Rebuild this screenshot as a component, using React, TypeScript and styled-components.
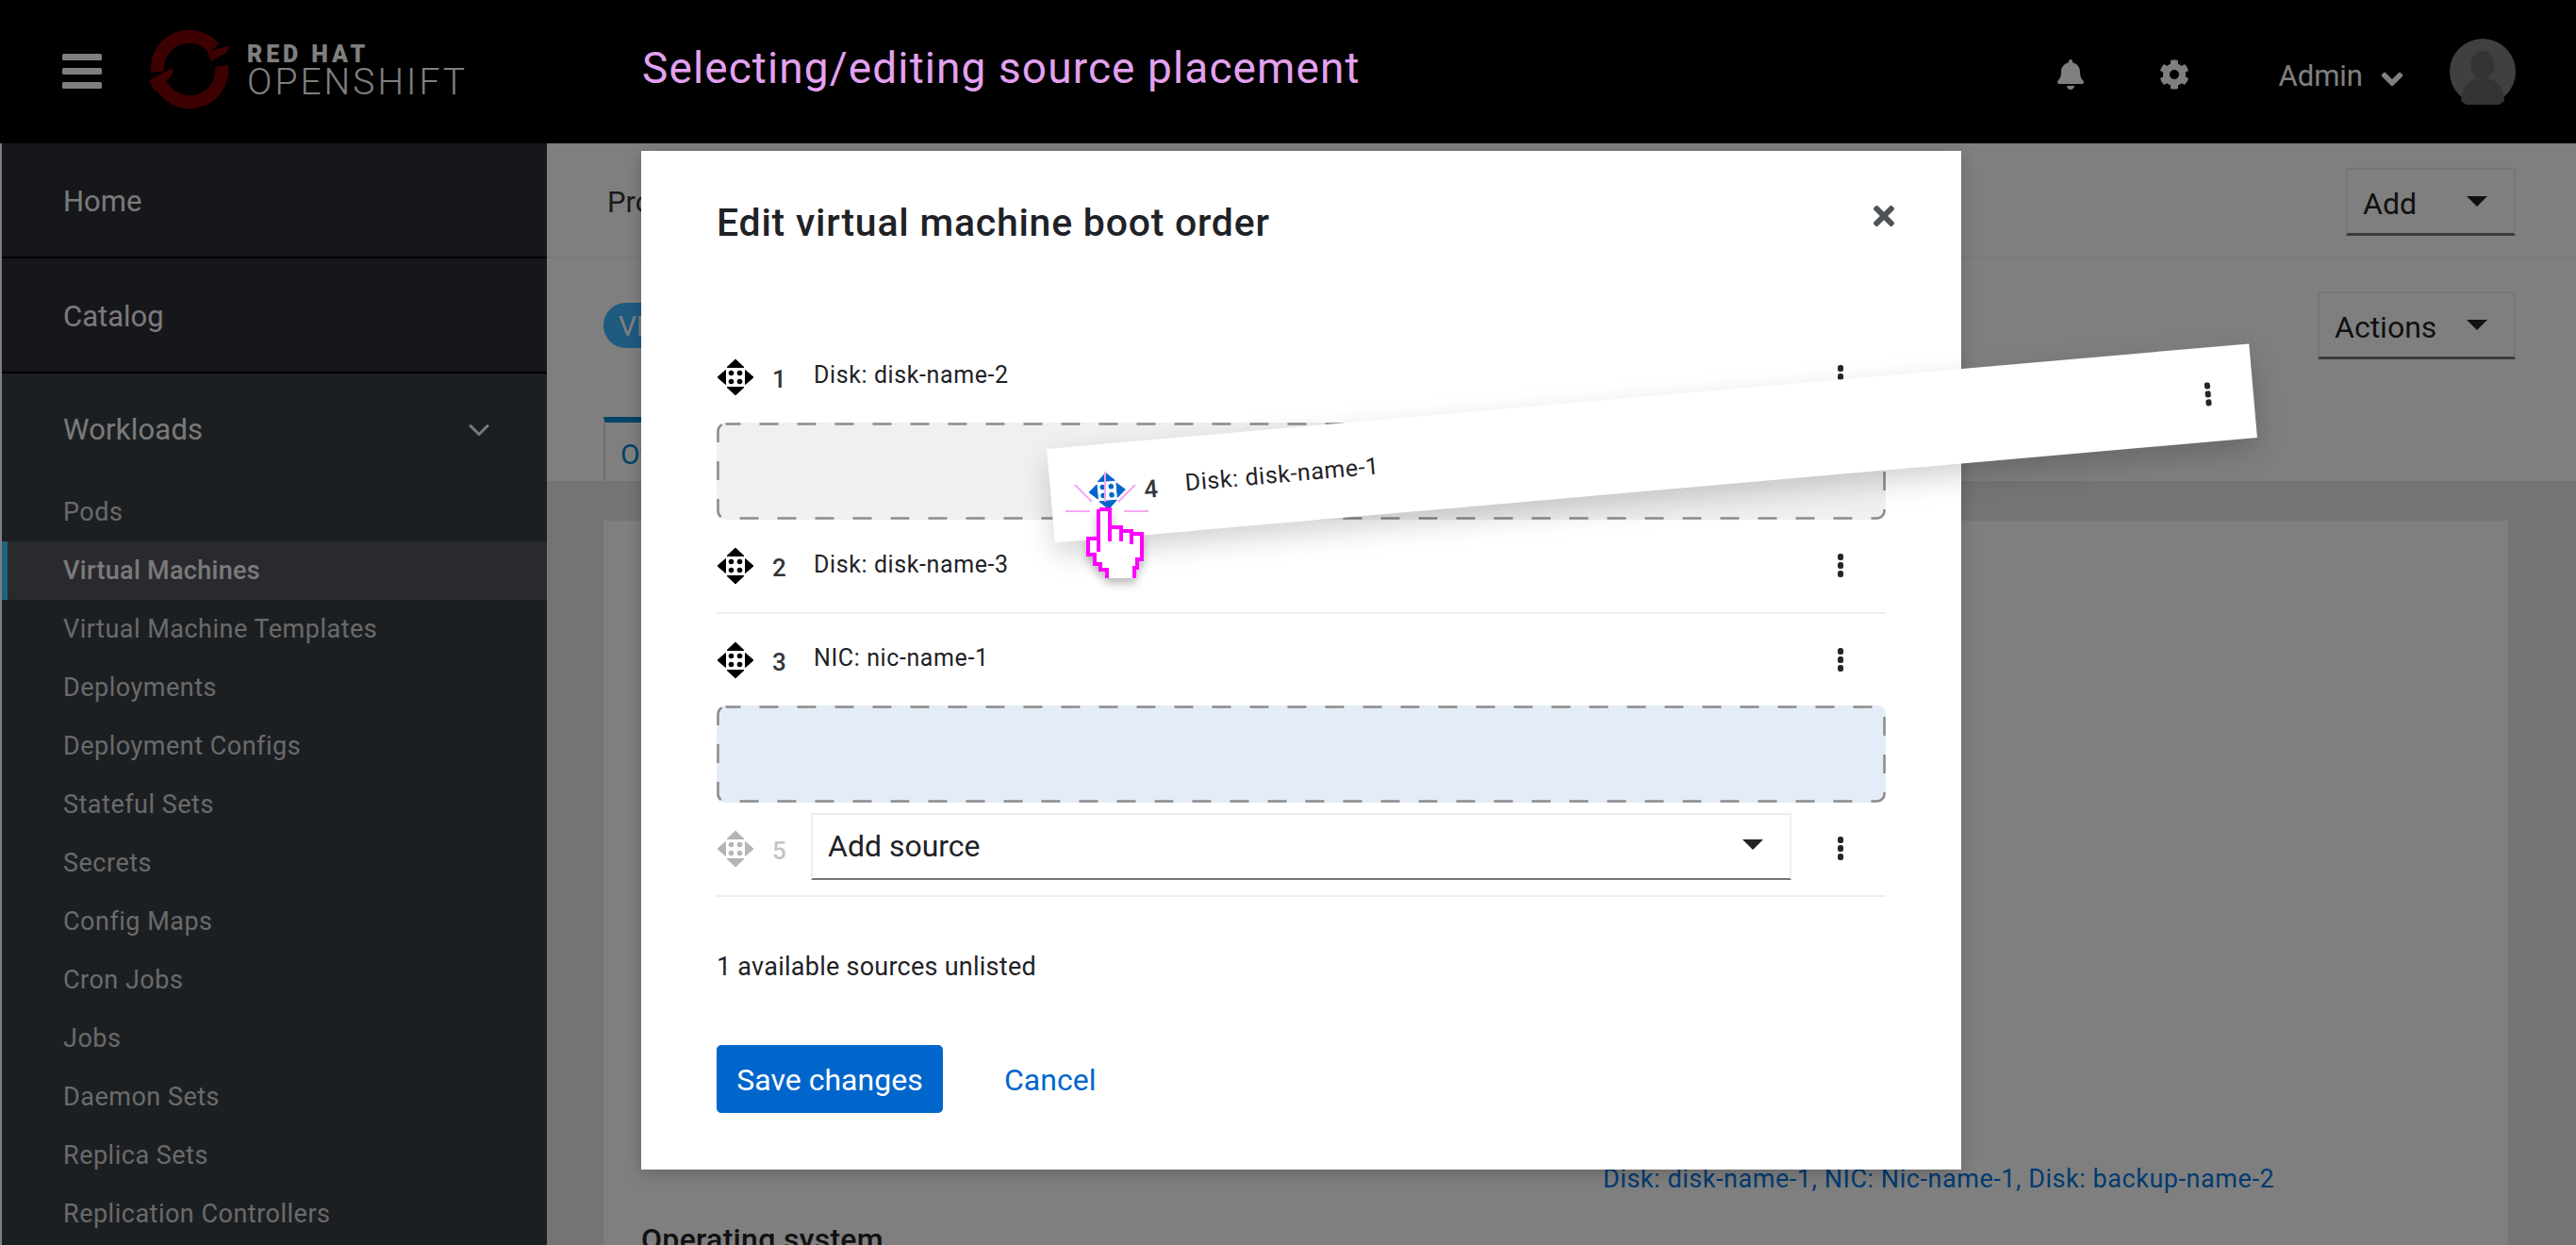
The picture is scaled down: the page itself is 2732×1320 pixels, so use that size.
import React from 'react';
import styled, { createGlobalStyle } from 'styled-components';
import { FaBell, FaCog, FaAngleDown, FaTimes } from 'react-icons/fa';
import { ChevronDown } from 'lucide-react';

const FONT = `Roboto, "Liberation Sans", sans-serif`;

const GlobalStyle = createGlobalStyle`
  html, body {
    margin: 0;
    padding: 0;
    background: #fff;
    font-family: ${FONT};
  }
  * { box-sizing: border-box; }
`;

const navItems = [
  'Pods',
  'Virtual Machines',
  'Virtual Machine Templates',
  'Deployments',
  'Deployment Configs',
  'Stateful Sets',
  'Secrets',
  'Config Maps',
  'Cron Jobs',
  'Jobs',
  'Daemon Sets',
  'Replica Sets',
  'Replication Controllers',
];

const MoveIcon = ({ color = '#000' }: { color?: string }) => (
  <svg width="40" height="40" viewBox="0 0 40 40" fill={color} stroke={color} strokeWidth="1" strokeLinejoin="round">
    <path d="M20 1 L29 9.5 H11 Z" />
    <path d="M20 39 L29 30.5 H11 Z" />
    <path d="M1 20 L9.5 12.5 V27.5 Z" />
    <path d="M39 20 L30.5 12.5 V27.5 Z" />
    <g stroke="none">
      <circle cx="15.5" cy="15.5" r="2.8" />
      <circle cx="24.5" cy="15.5" r="2.8" />
      <circle cx="15.5" cy="24.5" r="2.8" />
      <circle cx="24.5" cy="24.5" r="2.8" />
    </g>
  </svg>
);

const Kebab = () => (
  <svg width="8" height="28" viewBox="0 0 8 28" fill="#23262b">
    <rect x="1" y="1" width="6" height="7" rx="2.5" />
    <rect x="1" y="10" width="6" height="7" rx="2.5" />
    <rect x="1" y="19" width="6" height="7" rx="2.5" />
  </svg>
);

const Logo = () => (
  <svg width="100" height="94" viewBox="10 8 100 94">
    <g fill="none" stroke="#7d0303" strokeWidth="14">
      <path d="M87 32 A34 34 0 0 0 27 57" />
      <path d="M29 66 A34 34 0 0 0 95 51" />
    </g>
    <g fill="#7d0303">
      <path d="M80 36 L104 29 L101 36 L84 46 Z" />
      <path d="M18 66 L43 53 L43 60 L25 79 Z" />
    </g>
  </svg>
);

const Avatar = () => (
  <svg width="70" height="70" viewBox="0 0 70 70">
    <circle cx="35" cy="35" r="35" fill="#818181" />
    <ellipse cx="35" cy="28" rx="12.5" ry="15" fill="#696969" />
    <path d="M12 66 C13 50 20 42 35 42 C50 42 57 50 58 66 A35 35 0 0 1 12 66 Z" fill="#696969" />
  </svg>
);

const Burger = () => (
  <svg width="42" height="38" viewBox="0 0 42 38" fill="#fff">
    <rect y="0" width="42" height="7" rx="1.5" />
    <rect y="15" width="42" height="7" rx="1.5" />
    <rect y="30" width="42" height="7" rx="1.5" />
  </svg>
);

const DashBorder = () => (
  <DashSvg viewBox="0 0 1240 103">
    <rect x="1.5" y="1.5" width="1237" height="100" rx="8" fill="none" stroke="#8b8b8b" strokeWidth="2.5" strokeDasharray="20 20" strokeDashoffset="4" />
  </DashSvg>
);

const HandCursor = () => (
  <HandSvg viewBox="0 0 70 84" width="70" height="84">
    <path
      d="M16 5 H27 V24 H39 V28 H50 V31 H61 V58 H56 V67 H53 V78 H24 V69 H17 V63 H11 V53 H4 V36 H15 Z"
      fill="#fff"
    />
    <path
      d="M16 5 H27 V24 H39 V28 H50 V31 H61 V58 H56 V67 H53 V78 M24 78 V69 H17 V63 H11 V53 H4 V36 H15 V5"
      fill="none"
      stroke="#ff00ff"
      strokeWidth="4"
    />
    <path d="M27 24 V39 M39 28 V39 M50 31 V42 M15 36 V50" fill="none" stroke="#ff00ff" strokeWidth="4" />
  </HandSvg>
);

const ClickRays = () => (
  <RaySvg viewBox="0 0 90 50" width="90" height="50">
    <g stroke="#f3a6f3" strokeWidth="2" fill="none">
      <path d="M0 42 H26" />
      <path d="M62 42 H88" />
      <path d="M10 14 L28 32" />
      <path d="M74 14 L56 32" />
      <path d="M42 0 V32" />
    </g>
  </RaySvg>
);

const BootRow = ({ index, label, divided }: { index: number; label: string; divided?: boolean }) => (
  <Row $divided={divided}>
    <MoveIcon />
    <RowNumber>{index}</RowNumber>
    <RowLabel>{label}</RowLabel>
    <RowMenu><Kebab /></RowMenu>
  </Row>
);

export default function App() {
  return (
    <Page>
      <GlobalStyle />
      <Header>
        <BurgerSlot><Burger /></BurgerSlot>
        <LogoSlot>
          <Logo />
          <LogoText>
            <LogoTop>RED HAT</LogoTop>
            <LogoBottom>OPENSHIFT</LogoBottom>
          </LogoText>
        </LogoSlot>
        <HeaderTools>
          <ToolIcon><FaBell /></ToolIcon>
          <ToolIcon><FaCog /></ToolIcon>
          <UserName>Admin <FaAngleDown /></UserName>
          <Avatar />
        </HeaderTools>
      </Header>
      <Body>
        <Sidebar>
          <TopNav>Home</TopNav>
          <TopNav>Catalog</TopNav>
          <Group>
            <GroupTitle>
              Workloads
              <ChevronDown size={36} strokeWidth={2} />
            </GroupTitle>
            {navItems.map((item) => (
              <NavItem key={item} $active={item === 'Virtual Machines'}>{item}</NavItem>
            ))}
          </Group>
        </Sidebar>
        <Main>
          <TopBar>
            <Crumb>Projects</Crumb>
            <DropButton $width={180}>Add<Caret /></DropButton>
          </TopBar>
          <TitleBar>
            <Badge>VM</Badge>
            <DropButton $width={210}>Actions<Caret /></DropButton>
          </TitleBar>
          <Tabs>
            <Tab>Overview</Tab>
          </Tabs>
          <Content>
            <Card>
              <CardRow>
                <CardLabel>Boot order</CardLabel>
                <CardLink>Disk: disk-name-1, NIC: Nic-name-1, Disk: backup-name-2</CardLink>
              </CardRow>
              <CardHeading>Operating system</CardHeading>
            </Card>
          </Content>
        </Main>
      </Body>

      <Backdrop>
        <Modal>
          <ModalHead>
            <ModalTitle>Edit virtual machine boot order</ModalTitle>
            <CloseButton><FaTimes /></CloseButton>
          </ModalHead>
          <BootRow index={1} label="Disk: disk-name-2" />
          <DropZone>
            <DashBorder />
          </DropZone>
          <BootRow index={2} label="Disk: disk-name-3" divided />
          <BootRow index={3} label="NIC: nic-name-1" />
          <DropZone $target>
            <DashBorder />
          </DropZone>
          <Row $divided>
            <MoveIcon color="#b4b4b4" />
            <RowNumber $muted>5</RowNumber>
            <SourceSelect>Add source<Caret /></SourceSelect>
            <RowMenu><Kebab /></RowMenu>
          </Row>
          <Unlisted>1 available sources unlisted</Unlisted>
          <Actions>
            <PrimaryButton>Save changes</PrimaryButton>
            <LinkButton>Cancel</LinkButton>
          </Actions>
        </Modal>
      </Backdrop>

      <DragRow>
        <MoveIcon color="#0066cc" />
        <RowNumber>4</RowNumber>
        <RowLabel>Disk: disk-name-1</RowLabel>
        <DragMenu><Kebab /></DragMenu>
      </DragRow>
      <ClickRays />
      <HandCursor />
      <Annotation>Selecting/editing source placement</Annotation>
    </Page>
  );
}

const Page = styled.div`
  position: relative;
  width: 2732px;
  height: 1320px;
  overflow: hidden;
  padding-left: 2px;
  background: #fff;
`;

const Header = styled.header`
  display: flex;
  align-items: center;
  height: 152px;
  margin-left: -2px;
  padding-left: 66px;
  background: #000;
  color: #fff;
`;

const BurgerSlot = styled.div`
  display: flex;
  margin-top: -1px;
`;

const LogoSlot = styled.div`
  display: flex;
  align-items: center;
  margin-left: 42px;
  margin-top: -4px;
`;

const LogoText = styled.div`
  display: flex;
  flex-direction: column;
  margin-left: 12px;
  margin-top: 2px;
`;

const LogoTop = styled.div`
  font-size: 25px;
  line-height: 25px;
  font-weight: 900;
  letter-spacing: 3.9px;
`;

const LogoBottom = styled.div`
  font-size: 39px;
  line-height: 35px;
  font-weight: 300;
  letter-spacing: 3px;
`;

const HeaderTools = styled.div`
  display: flex;
  align-items: center;
  margin-left: auto;
  padding-right: 64px;
`;

const ToolIcon = styled.div`
  display: flex;
  margin-right: 78px;
  margin-top: 6px;
  font-size: 32px;
  color: #fff;
`;

const UserName = styled.div`
  display: flex;
  align-items: center;
  gap: 13px;
  margin-left: 16px;
  margin-right: 43px;
  margin-top: 9px;
  font-size: 31px;

  svg {
    font-size: 36px;
    margin-top: 6px;
  }
`;

const Body = styled.div`
  display: flex;
  height: 1168px;
`;

const Sidebar = styled.nav`
  width: 578px;
  flex: none;
  background: #383e44;
`;

const TopNav = styled.div`
  display: flex;
  align-items: center;
  height: 122px;
  padding-left: 65px;
  padding-top: 2px;
  border-bottom: 2px solid #000;
  background: #2c2e36;
  font-size: 31px;
  color: #f4f4f4;
`;

const Group = styled.div`
  display: flex;
  flex-direction: column;
`;

const GroupTitle = styled.div`
  display: flex;
  align-items: center;
  justify-content: space-between;
  height: 116px;
  padding: 2px 54px 0 65px;
  font-size: 31px;
  letter-spacing: 0.2px;
  color: #f4f4f4;
  svg { margin-top: 2px; }
`;

const NavItem = styled.div<{ $active?: boolean }>`
  display: flex;
  align-items: center;
  height: 62px;
  padding-left: ${(p) => (p.$active ? 59 : 65)}px;
  border-left: ${(p) => (p.$active ? '6px solid #38c8ff' : 'none')};
  background: ${(p) => (p.$active ? '#52525c' : 'transparent')};
  font-size: 27px;
  letter-spacing: ${(p) => (p.$active ? 0.3 : 0.5)}px;
  font-weight: ${(p) => (p.$active ? 500 : 400)};
  color: ${(p) => (p.$active ? '#f4f4f4' : '#d4d4d4')};
`;

const Main = styled.main`
  flex: 1;
  display: flex;
  flex-direction: column;
  min-width: 0;
`;

const TopBar = styled.div`
  flex: none;
  display: flex;
  align-items: center;
  justify-content: space-between;
  height: 122px;
  padding: 4px 64px 0;
  border-bottom: 2px solid #f0f0f0;
`;

const Crumb = styled.div`
  font-size: 31px;
  color: #33363b;
`;

const DropButton = styled.div<{ $width: number }>`
  position: relative;
  display: flex;
  align-items: center;
  justify-content: space-between;
  width: ${(p) => p.$width}px;
  height: 72px;
  padding: 4px 28px 0 16px;
  border: 2px solid #ededed;
  border-bottom: 3px solid #72767b;
  font-size: 32px;
  color: #222;
`;

const Caret = styled.span`
  width: 0;
  height: 0;
  border-left: 11px solid transparent;
  border-right: 11px solid transparent;
  border-top: 11px solid #222;
  margin-top: -4px;
`;

const TitleBar = styled.div`
  flex: none;
  display: flex;
  align-items: center;
  justify-content: space-between;
  height: 168px;
  padding: 0 64px 26px 60px;
`;

const Badge = styled.div`
  display: flex;
  align-items: center;
  padding: 0 16px;
  height: 48px;
  border-radius: 24px;
  background: #3eb5ff;
  color: #fff;
  font-size: 30px;
`;

const Tabs = styled.div`
  flex: none;
  display: flex;
  height: 70px;
  padding-left: 60px;
  border-bottom: 2px solid #e8e8e8;
`;

const Tab = styled.div`
  padding: 16px 20px 0 16px;
  border-top: 6px solid #0088ce;
  border-left: 2px solid #dcdcdc;
  font-size: 30px;
  color: #0088ce;
`;

const Content = styled.div`
  flex: 1;
  min-height: 0;
  overflow: hidden;
  padding: 40px 72px 0 60px;
  background: #e8e8e8;
`;

const Card = styled.div`
  height: 100%;
  padding: 658px 0 0 40px;
  background: #fff;
`;

const CardRow = styled.div`
  display: flex;
  height: 70px;
`;

const CardLabel = styled.div`
  width: 1020px;
  font-size: 28px;
  font-weight: 500;
  line-height: 33px;
  color: #222;
`;

const CardLink = styled.div`
  margin-top: 24px;
  font-size: 27px;
  letter-spacing: 0.55px;
  color: #0077e0;
`;

const CardHeading = styled.div`
  margin-top: 15px;
  font-size: 32px;
  letter-spacing: 0.3px;
  font-weight: 500;
  color: #222;
`;

const Backdrop = styled.div`
  position: absolute;
  inset: 0;
  display: flex;
  justify-content: center;
  padding: 160px 0 0 28px;
  background: rgba(0, 0, 0, 0.5);
`;

const Modal = styled.section`
  width: 1400px;
  height: 1080px;
  padding: 0 80px;
  background: #fff;
  box-shadow: 0 4px 16px rgba(0, 0, 0, 0.2);
`;

const ModalHead = styled.div`
  display: flex;
  justify-content: space-between;
  height: 191px;
  padding-top: 48px;
`;

const ModalTitle = styled.h1`
  margin: 0;
  font-size: 41px;
  line-height: 56px;
  letter-spacing: 0.75px;
  font-weight: 500;
  color: #1f2226;
`;

const CloseButton = styled.div`
  margin: 1px -14px 0 0;
  font-size: 32px;
  line-height: 32px;
  height: 40px;
  display: flex;
  align-items: center;
  color: #4f5255;
`;

const Row = styled.div<{ $divided?: boolean }>`
  display: flex;
  align-items: center;
  height: ${(p) => (p.$divided ? 100 : 97)}px;
  border-bottom: ${(p) => (p.$divided ? '2px solid #ededed' : 'none')};
`;

const RowNumber = styled.span<{ $muted?: boolean }>`
  width: 63px;
  padding-left: 19px;
  margin-top: 4px;
  font-size: 26px;
  font-weight: 500;
  color: ${(p) => (p.$muted ? '#c4c4c4' : '#33363a')};
`;

const RowLabel = styled.span`
  margin-bottom: 4px;
  font-size: 25px;
  letter-spacing: 0.6px;
  color: #1f2226;
`;

const RowMenu = styled.div`
  display: flex;
  margin-left: auto;
  margin-right: 44px;
`;

const SourceSelect = styled.div`
  display: flex;
  align-items: center;
  justify-content: space-between;
  width: 1040px;
  height: 71px;
  margin: -6px 0 0 -3px;
  padding: 0 28px 0 16px;
  border: 2px solid #ededed;
  border-bottom: 2px solid #72767b;
  font-size: 32px;
  color: #1f2226;
`;

const DropZone = styled.div<{ $target?: boolean }>`
  position: relative;
  height: 103px;
  border-radius: 8px;
  background: ${(p) => (p.$target ? '#e4edf7' : '#f0f0f0')};
`;

const DashSvg = styled.svg`
  position: absolute;
  inset: 0;
  width: 100%;
  height: 100%;
`;

const Unlisted = styled.p`
  margin: 54px 0 0;
  font-size: 27px;
  line-height: 40px;
  letter-spacing: 0.25px;
  color: #1f2226;
`;

const Actions = styled.div`
  display: flex;
  align-items: center;
  gap: 65px;
  margin-top: 63px;
`;

const PrimaryButton = styled.button`
  width: 240px;
  height: 72px;
  padding: 2px 0 0;
  border: 0;
  border-radius: 5px;
  background: #0066cc;
  color: #fff;
  font-family: ${FONT};
  font-size: 32px;
`;

const LinkButton = styled.button`
  padding: 2px 0 0;
  border: 0;
  background: none;
  color: #0066cc;
  font-family: ${FONT};
  font-size: 32px;
`;

const DragRow = styled.div`
  position: absolute;
  left: 1112px;
  top: 420px;
  display: flex;
  align-items: center;
  width: 1280px;
  height: 100px;
  padding-left: 40px;
  background: #fff;
  transform: rotate(-5deg);
  box-shadow: 0 12px 30px rgba(0, 0, 0, 0.18);
`;

const DragMenu = styled.div`
  display: flex;
  margin-left: auto;
  margin-right: 44px;
`;

const HandSvg = styled.svg`
  position: absolute;
  left: 1150px;
  top: 535px;
  filter: drop-shadow(0 6px 4px rgba(0, 0, 0, 0.25));
  shape-rendering: crispEdges;
`;

const RaySvg = styled.svg`
  position: absolute;
  left: 1130px;
  top: 500px;
`;

const Annotation = styled.div`
  position: absolute;
  left: 681px;
  top: 44px;
  font-size: 46px;
  line-height: 56px;
  letter-spacing: 1.1px;
  color: #e3a1f0;
`;
